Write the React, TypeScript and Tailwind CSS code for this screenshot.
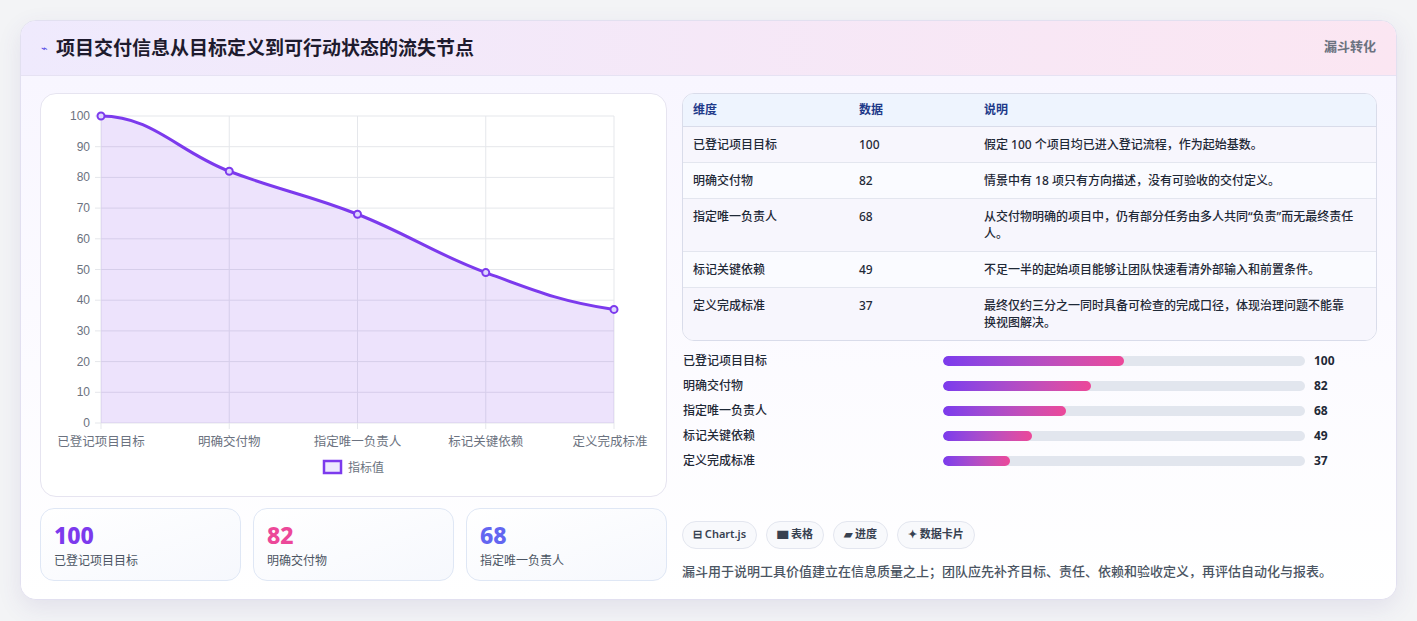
import React from 'react';

const rows = [
  { name: '已登记项目目标', value: 100, note: '假定 100 个项目均已进入登记流程，作为起始基数。' },
  { name: '明确交付物', value: 82, note: '情景中有 18 项只有方向描述，没有可验收的交付定义。' },
  { name: '指定唯一负责人', value: 68, note: '从交付物明确的项目中，仍有部分任务由多人共同“负责”而无最终责任人。' },
  { name: '标记关键依赖', value: 49, note: '不足一半的起始项目能够让团队快速看清外部输入和前置条件。' },
  { name: '定义完成标准', value: 37, note: '最终仅约三分之一同时具备可检查的完成口径，体现治理问题不能靠换视图解决。' },
];

function Chart() {
  const x0 = 60, x1 = 573, yTop = 22, yBot = 329;
  const xs = rows.map((_, i) => x0 + (i * (x1 - x0)) / 4);
  const ys = rows.map((r) => yBot - (r.value / 100) * (yBot - yTop));
  const pts = xs.map((x, i) => [x, ys[i]]);
  // smooth curve
  let d = `M${pts[0][0]},${pts[0][1]}`;
  for (let i = 0; i < pts.length - 1; i++) {
    const [ax, ay] = pts[i];
    const [bx, by] = pts[i + 1];
    const dx = (bx - ax) * 0.4;
    d += ` C${ax + dx},${ay + (i === 0 ? 0 : (by - (pts[i - 1] ? pts[i - 1][1] : ay)) * 0.2)} ${bx - dx},${by - ((pts[i + 2] ? pts[i + 2][1] : by) - ay) * 0.2} ${bx},${by}`;
  }
  const area = `${d} L${x1},${yBot} L${x0},${yBot} Z`;
  return (
    <svg width="627" height="402" className="block" style={{ fontFamily: '"Liberation Sans", "Noto Sans CJK SC", sans-serif' }}>
      {Array.from({ length: 11 }).map((_, i) => {
        const y = yBot - i * ((yBot - yTop) / 10);
        return (
          <g key={i}>
            <line x1={x0 - 6} x2={x1} y1={y} y2={y} stroke="#e5e7eb" />
            <text x={49} y={y + 4} textAnchor="end" fontSize="12" fill="#6b7280">{i * 10}</text>
          </g>
        );
      })}
      {xs.map((x, i) => (
        <g key={i}>
          <line x1={x} x2={x} y1={yTop} y2={yBot + 6} stroke="#e5e7eb" />
          <text x={i === 0 ? x + 0 : i === 4 ? x - 4 : x} y={yBot + 23} textAnchor="middle" fontSize="12.5" fill="#6b7280" fontFamily='"Noto Sans CJK SC", sans-serif'>{rows[i].name}</text>
        </g>
      ))}
      <path d={area} fill="#7c3aed" fillOpacity="0.14" />
      <path d={d} fill="none" stroke="#7c3aed" strokeWidth="3" />
      {pts.map(([x, y], i) => (
        <circle key={i} cx={x} cy={y} r="3.5" fill="#ddd6fe" stroke="#7c3aed" strokeWidth="2" />
      ))}
      <rect x={283} y={367} width={17} height={12} fill="#ede9fe" stroke="#7c3aed" strokeWidth="2.5" />
      <text x={307} y={378} fontSize="12" fill="#6b7280" fontFamily='"Noto Sans CJK SC", sans-serif'>指标值</text>
    </svg>
  );
}

export default function App() {
  const font = { fontFamily: '"Noto Sans", "Noto Sans CJK SC", sans-serif' };
  return (
    <div className="w-[1417px] h-[621px] bg-[#f3f4f6] pt-[20px] pl-[20px]" style={font}>
      <div className="w-[1377px] h-[580px] rounded-[16px] bg-white border border-[#e2e0f0] shadow-[0_8px_24px_rgba(80,60,140,0.10)] overflow-hidden flex flex-col">
        <div className="h-[55px] shrink-0 flex items-center justify-between px-5 bg-gradient-to-r from-[#efeafd] to-[#fbe6f2] border-b border-[#e6e2f3]">
          <div className="flex items-center gap-2">
            <span className="text-[11px] text-[#4f46e5]">⌁</span>
            <h1 className="text-[19px] font-bold text-[#1e1b2e]">项目交付信息从目标定义到可行动状态的流失节点</h1>
          </div>
          <span className="self-start mt-[16px] text-[13px] font-semibold text-[#6b7280]">漏斗转化</span>
        </div>
        <div className="flex-1 flex gap-[15px] px-[19px] pt-[17px] pb-[19px] bg-gradient-to-b from-[#f8f6ff] to-white">
          <div className="w-[627px] flex flex-col gap-[11px]">
            <div className="h-[404px] rounded-[16px] bg-white border border-[#e6e4f0]">
              <Chart />
            </div>
            <div className="grid grid-cols-3 gap-[12px]">
              {[
                ['100', 'text-[#7c3aed]', '已登记项目目标'],
                ['82', 'text-[#ec4899]', '明确交付物'],
                ['68', 'text-[#6366f1]', '指定唯一负责人'],
              ].map(([v, c, l]) => (
                <div key={l} className="h-[73px] rounded-[14px] border border-[#dfe7f5] bg-gradient-to-br from-white to-[#f6f8fd] px-[13px] pt-[11px]">
                  <div className={`text-[23px] leading-[30px] font-extrabold ${c}`}>{v}</div>
                  <div className="text-[12px] text-[#4b5563] mt-[2px]">{l}</div>
                </div>
              ))}
            </div>
          </div>
          <div className="flex-1 flex flex-col">
            <div className="rounded-[12px] border border-[#d9dcea] overflow-hidden bg-white text-[12px] text-[#1f2937]">
              <div className="grid grid-cols-[166px_125px_1fr] h-[33px] items-center px-[10px] bg-[#eef4fe] border-b border-[#d9dcea] font-semibold text-[#1e3a8a]">
                <span>维度</span><span>数据</span><span>说明</span>
              </div>
              {rows.map((r, i) => (
                <div key={r.name} className={`grid grid-cols-[166px_125px_1fr] px-[10px] py-[9px] leading-[17px] font-medium ${i < 4 ? 'border-b border-[#e3e6ef]' : ''} ${i % 2 ? 'bg-[#fafbff]' : 'bg-[#f7f6fd]'}`}>
                  <span>{r.name}</span><span>{r.value}</span><span className="pr-[12px]">{r.note}</span>
                </div>
              ))}
            </div>
            <div className="mt-[11px] flex flex-col gap-[8px]">
              {rows.map((r) => (
                <div key={r.name} className="flex items-center h-[17px] text-[12px] font-medium text-[#1f2937]">
                  <span className="w-[261px] pl-[1px]">{r.name}</span>
                  <div className="w-[362px] h-[10px] rounded-full bg-[#e2e6ee] overflow-hidden">
                    <div className="h-full rounded-full bg-gradient-to-r from-[#7c3aed] to-[#ec4899]" style={{ width: `${r.value * 0.5}%` }} />
                  </div>
                  <span className="ml-[9px] font-bold">{r.value}</span>
                </div>
              ))}
            </div>
            <div className="mt-auto flex gap-[9px]">
              {['⊟ Chart.js', '▆ 表格', '▰ 进度', '✦ 数据卡片'].map((t) => (
                <span key={t} className="h-[28px] px-[10px] rounded-full border border-[#e3e6ef] bg-[#f8f9fc] text-[11px] font-semibold text-[#374151] flex items-center">{t}</span>
              ))}
            </div>
            <p className="mt-[13px] text-[13px] font-medium text-[#4b5563]">漏斗用于说明工具价值建立在信息质量之上；团队应先补齐目标、责任、依赖和验收定义，再评估自动化与报表。</p>
          </div>
        </div>
      </div>
    </div>
  );
}
